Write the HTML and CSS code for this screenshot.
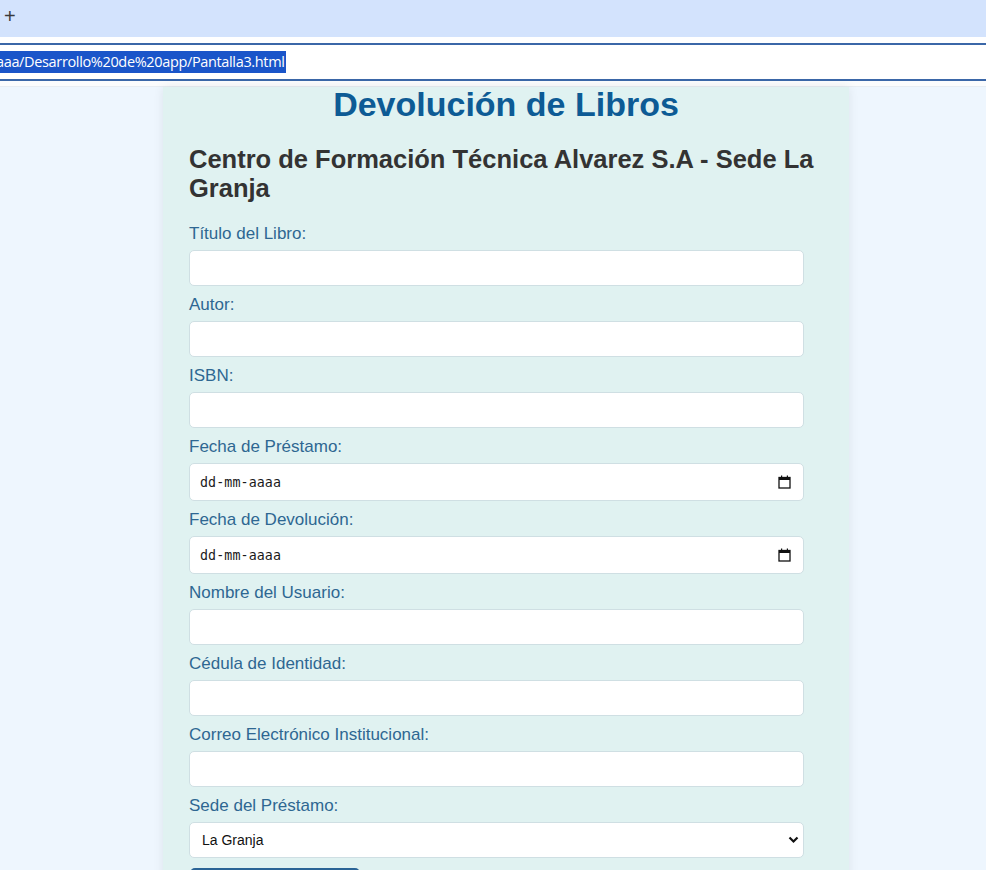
FILE: index.html
```html
<!DOCTYPE html>
<html lang="es">
<head>
<meta charset="utf-8">
<title>Devolución de Libros</title>
<link rel="stylesheet" href="styles.css">
</head>
<body>
<div class="tabbar"><span class="newtab">+</span></div>
<div class="chrome-gap"></div>
<div class="addressbar"><span class="url">aaa/Desarrollo%20de%20app/Pantalla3.html</span></div>
<div class="chrome-under"></div>
<div class="viewport">
  <main class="card">
    <h1 class="title">Devolución de Libros</h1>
    <h2 class="subtitle">Centro de Formación Técnica Alvarez S.A - Sede La Granja</h2>
    <form class="form">
      <label class="label" for="titulo">Título del Libro:</label>
      <input class="field" id="titulo" type="text">
      <label class="label" for="autor">Autor:</label>
      <input class="field" id="autor" type="text">
      <label class="label" for="isbn">ISBN:</label>
      <input class="field" id="isbn" type="text">
      <label class="label">Fecha de Préstamo:</label>
      <div class="field date-field"><span class="date-text">dd-mm-aaaa</span>
        <svg class="cal" width="13" height="14" viewBox="0 0 13 14"><rect x="1" y="2.5" width="11" height="10.5" fill="none" stroke="#111" stroke-width="1.3"/><rect x="1" y="2" width="11" height="3" fill="#111"/><rect x="3" y="0.5" width="1.2" height="2" fill="#111"/><rect x="8.8" y="0.5" width="1.2" height="2" fill="#111"/></svg>
      </div>
      <label class="label">Fecha de Devolución:</label>
      <div class="field date-field"><span class="date-text">dd-mm-aaaa</span>
        <svg class="cal" width="13" height="14" viewBox="0 0 13 14"><rect x="1" y="2.5" width="11" height="10.5" fill="none" stroke="#111" stroke-width="1.3"/><rect x="1" y="2" width="11" height="3" fill="#111"/><rect x="3" y="0.5" width="1.2" height="2" fill="#111"/><rect x="8.8" y="0.5" width="1.2" height="2" fill="#111"/></svg>
      </div>
      <label class="label" for="nombre">Nombre del Usuario:</label>
      <input class="field" id="nombre" type="text">
      <label class="label" for="cedula">Cédula de Identidad:</label>
      <input class="field" id="cedula" type="text">
      <label class="label" for="correo">Correo Electrónico Institucional:</label>
      <input class="field" id="correo" type="email">
      <label class="label" for="sede">Sede del Préstamo:</label>
      <div class="select-wrap">
        <select class="field select" id="sede">
          <option>La Granja</option>
        </select>
        <svg class="chev" width="11" height="8" viewBox="0 0 11 8"><path d="M1.5 1.5 L5.5 5.5 L9.5 1.5" fill="none" stroke="#111" stroke-width="2.2"/></svg>
      </div>
      <button class="submit" type="button" aria-label="Registrar Devolución"></button>
    </form>
  </main>
</div>
</body>
</html>
```

FILE: styles.css
```css
html, body {
  margin: 0;
  padding: 0;
  height: 870px;
  overflow: hidden;
}
body {
  font-family: "Liberation Sans", Arial, sans-serif;
  background: #eef6fe;
}
.tabbar {
  height: 37px;
  background: #d3e3fd;
  display: flex;
  align-items: center;
  padding-left: 4px;
}
.newtab {
  font-family: "Liberation Sans", Arial, sans-serif;
  font-size: 20px;
  color: #3a3a3a;
  line-height: 20px;
  margin-top: -5px;
}
.chrome-gap {
  height: 6px;
  background: #ffffff;
}
.addressbar {
  height: 34px;
  background: #ffffff;
  border-top: 2px solid #3b67a8;
  border-bottom: 2px solid #3b67a8;
  display: flex;
  align-items: center;
}
.url {
  background: #1a55c9;
  color: #ffffff;
  font-family: "Open Sans", "Liberation Sans", sans-serif;
  font-size: 14.5px;
  line-height: 22px;
  padding: 0 1px 0 0;
  margin-left: -4px;
  letter-spacing: -0.35px;
}
.chrome-under {
  height: 6px;
  background: #fbfcfd;
  border-bottom: 1px solid #e8edf2;
  box-sizing: border-box;
}
.viewport {
  height: 783px;
  background: #eef6fe;
}
.card {
  width: 686px;
  margin-left: 163px;
  box-sizing: border-box;
  padding: 0 26px;
  background: #e0f2f1;
  box-shadow: 0 0 10px rgba(0, 0, 0, 0.08);
  height: 800px;
}
.title {
  margin: 0;
  text-align: center;
  font-size: 34px;
  line-height: 34px;
  color: #0d5b95;
  font-weight: bold;
}
.subtitle {
  margin: 24px 0 22px;
  font-size: 25.5px;
  line-height: 29px;
  color: #333333;
  font-weight: bold;
}
.form {
  display: flex;
  flex-direction: column;
  align-items: flex-start;
}
.label {
  display: block;
  font-size: 17px;
  line-height: 18px;
  color: #2e6792;
  margin-bottom: 7px;
}
.field {
  width: 615px;
  height: 36px;
  box-sizing: border-box;
  margin: 0 0 10px;
  border: 1px solid #cfdfe3;
  border-radius: 5px;
  background: #ffffff;
  padding: 0 8px;
  font-family: "Liberation Sans", Arial, sans-serif;
  font-size: 14px;
  color: #111111;
  outline: none;
}
.date-field {
  height: 38px;
  display: flex;
  align-items: center;
  justify-content: space-between;
  padding: 0 12px 0 10px;
}
.date-text {
  font-family: "DejaVu Sans Mono", "Liberation Mono", monospace;
  font-size: 13.3px;
  color: #1a1a1a;
  letter-spacing: 0.1px;
}
.cal {
  display: block;
}
.select-wrap {
  position: relative;
}
.select {
  -webkit-appearance: none;
  appearance: none;
  padding-left: 12px;
  display: block;
  color: #111111;
}
.chev {
  position: absolute;
  right: 5px;
  top: 14px;
}
.submit {
  margin-top: 0;
  width: 170px;
  height: 40px;
  border: none;
  border-radius: 5px;
  background: #2a6496;
  margin-left: 1px;
}
```
